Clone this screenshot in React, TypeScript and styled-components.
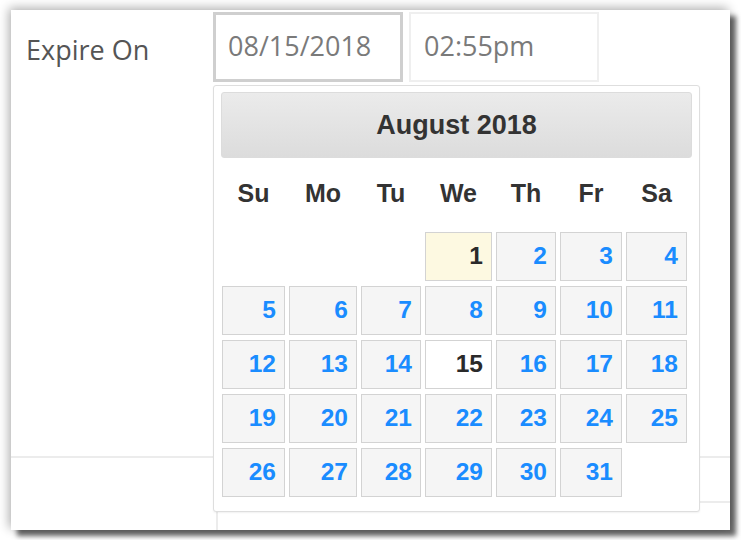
import * as React from 'react';
import styled, { createGlobalStyle } from 'styled-components';

const GlobalStyle = createGlobalStyle`
  html, body { margin: 0; padding: 0; background: #fff; }
  body { width: 741px; height: 540px; overflow: hidden; }
`;

const Theme = {
  colors: {
    label: `#555`,
    input: `#7a7a7a`,
    line: `#ececec`,
    dayText: `#333`,
    link: `#1a8cff`,
    cellBg: `#f5f5f5`,
    cellBorder: `#d3d3d3`,
    highlight: `#fdf9e1`,
  },
  fonts: {
    body: `"Open Sans", "Noto Sans", sans-serif`,
    calendar: `"Liberation Sans", Arial, sans-serif`,
  },
};

const COLS = `63px 68px 60px 67px 60px 62px 61px`;
const DAY_NAMES = ['Su', 'Mo', 'Tu', 'We', 'Th', 'Fr', 'Sa'];

const Frame = styled.div`
  margin: 10px 0 0 11px;
  width: 719px;
  height: 520px;
  background: #fff;
  overflow: hidden;
  font-family: ${Theme.fonts.body};
  box-shadow: 6px 6px 5px rgba(0, 0, 0, 0.6), -2px -2px 10px rgba(0, 0, 0, 0.32);
`;

const FormRow = styled.div<{ $height?: number }>`
  display: grid;
  grid-template-columns: 202px 1fr;
  height: ${(p) => (p.$height ? `${p.$height}px` : 'auto')};
  box-sizing: border-box;
  padding-top: 2px;
  border-bottom: 2px solid ${Theme.colors.line};
`;

const Label = styled.div`
  padding: 19px 0 0 15px;
  font-size: 27px;
  color: ${Theme.colors.label};
`;

const Fields = styled.div`
  display: flex;
  gap: 6px;
  align-items: flex-start;
`;

const FieldWrap = styled.div`
  position: relative;
`;

const Input = styled.div<{ $focused?: boolean }>`
  box-sizing: border-box;
  width: 190px;
  height: 70px;
  display: flex;
  align-items: center;
  padding-left: ${(p) => (p.$focused ? 12 : 13)}px;
  padding-bottom: 4px;
  font-size: 27px;
  color: ${Theme.colors.input};
  background: #fff;
  border: ${(p) => (p.$focused ? '3px solid #cfcfcf' : '2px solid #efefef')};
`;

const LowerRow = styled.div`
  padding: 43px 0 0 205px;
`;

const LowerInput = styled.div`
  box-sizing: border-box;
  width: 560px;
  height: 60px;
  border: 2px solid ${Theme.colors.line};
`;

const Popup = styled.div`
  position: absolute;
  top: 73px;
  left: 0;
  z-index: 5;
  box-sizing: border-box;
  width: 487px;
  padding: 6px 7px 14px 7px;
  background: #fff;
  border: 1px solid #dedede;
  border-radius: 3px;
  box-shadow: 0 1px 2px rgba(0, 0, 0, 0.06);
  font-family: ${Theme.fonts.calendar};
`;

const Header = styled.div`
  height: 66px;
  box-sizing: border-box;
  display: flex;
  align-items: center;
  justify-content: center;
  border: 1px solid #dcdcdc;
  border-radius: 3px;
  background: linear-gradient(#ebebeb, #dcdcdc);
  font-size: 27px;
  font-weight: bold;
  color: ${Theme.colors.dayText};
`;

const Grid = styled.div`
  display: grid;
  grid-template-columns: ${COLS};
  column-gap: 4px;
  margin: 0 2px 0 1px;
`;

const DayNames = styled(Grid)`
  height: 74px;
  align-items: center;
`;

const DayName = styled.div`
  text-align: center;
  font-size: 25px;
  font-weight: bold;
  color: ${Theme.colors.dayText};
  padding-bottom: 4px;
`;

const Days = styled(Grid)`
  grid-auto-rows: 49px;
  row-gap: 5px;
`;

const Cell = styled.div<{ $kind?: 'normal' | 'today' | 'active' }>`
  box-sizing: border-box;
  display: flex;
  align-items: center;
  justify-content: flex-end;
  padding: 0 8px 1px 0;
  font-size: 24.5px;
  font-weight: bold;
  border: 1px solid ${Theme.colors.cellBorder};
  background: ${(p) =>
    p.$kind === 'today' ? Theme.colors.highlight : p.$kind === 'active' ? '#fff' : Theme.colors.cellBg};
  color: ${(p) => (p.$kind === 'normal' ? Theme.colors.link : '#2a2a2a')};
`;

const Blank = styled.div``;

const Calendar = () => {
  const cells: React.ReactNode[] = [];
  for (let i = 0; i < 3; i++) cells.push(<Blank key={`b${i}`} />);
  for (let d = 1; d <= 31; d++) {
    const kind = d === 1 ? 'today' : d === 15 ? 'active' : 'normal';
    cells.push(
      <Cell key={d} $kind={kind}>
        {d}
      </Cell>
    );
  }
  return (
    <Popup>
      <Header>August 2018</Header>
      <DayNames>
        {DAY_NAMES.map((n) => (
          <DayName key={n}>{n}</DayName>
        ))}
      </DayNames>
      <Days>{cells}</Days>
    </Popup>
  );
};

const App = () => (
  <>
    <GlobalStyle />
    <Frame>
      <FormRow $height={448}>
        <Label>Expire On</Label>
        <Fields>
          <FieldWrap>
            <Input $focused>08/15/2018</Input>
            <Calendar />
          </FieldWrap>
          <Input>02:55pm</Input>
        </Fields>
      </FormRow>
      <LowerRow>
        <LowerInput />
      </LowerRow>
    </Frame>
  </>
);

export default App;
